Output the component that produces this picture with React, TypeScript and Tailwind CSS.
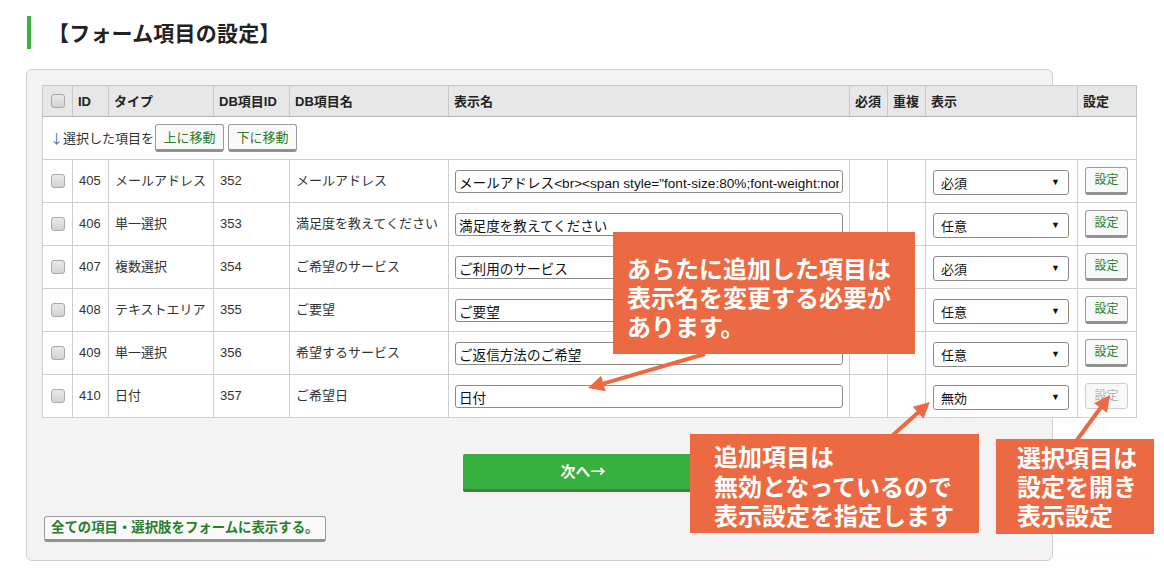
import React from "react";

const rows = [
  { id: "405", type: "メールアドレス", dbid: "352", dbname: "メールアドレス", disp: 'メールアドレス<br><span style="font-size:80%;font-weight:normal">', sel: "必須", enabled: true },
  { id: "406", type: "単一選択", dbid: "353", dbname: "満足度を教えてください", disp: "満足度を教えてください", sel: "任意", enabled: true },
  { id: "407", type: "複数選択", dbid: "354", dbname: "ご希望のサービス", disp: "ご利用のサービス", sel: "必須", enabled: true },
  { id: "408", type: "テキストエリア", dbid: "355", dbname: "ご要望", disp: "ご要望", sel: "任意", enabled: true },
  { id: "409", type: "単一選択", dbid: "356", dbname: "希望するサービス", disp: "ご返信方法のご希望", sel: "任意", enabled: true },
  { id: "410", type: "日付", dbid: "357", dbname: "ご希望日", disp: "日付", sel: "無効", enabled: false },
];

function Checkbox() {
  return (
    <div className="w-[14px] h-[14px] rounded-[3px] border border-[#a9a9a9] bg-gradient-to-b from-[#e9e9e9] to-[#d3d3d3]" />
  );
}

function SmallBtn({ children, className = "" }: { children: React.ReactNode; className?: string }) {
  return (
    <div
      className={
        "flex items-center justify-center bg-[#f9f9f9] border border-[#9a9a9a] border-b-[3px] border-b-[#8e938c] rounded-[3px] text-[#2a7d2a] leading-none " +
        className
      }
    >
      {children}
    </div>
  );
}

function Arrow({ x1, y1, x2, y2 }: { x1: number; y1: number; x2: number; y2: number }) {
  const dx = x2 - x1;
  const dy = y2 - y1;
  const len = Math.sqrt(dx * dx + dy * dy);
  const ux = dx / len;
  const uy = dy / len;
  const hl = 16;
  const hw = 8;
  const bx = x2 - ux * hl;
  const by = y2 - uy * hl;
  const px = -uy;
  const py = ux;
  const pts = `${x2},${y2} ${bx + px * hw},${by + py * hw} ${bx - px * hw},${by - py * hw}`;
  return (
    <g>
      <line x1={x1} y1={y1} x2={bx + ux * 2} y2={by + uy * 2} stroke="#eb6a43" strokeWidth={4} />
      <polygon points={pts} fill="#eb6a43" />
    </g>
  );
}

export default function App() {
  const headers = [
    { w: "w-[30px]", t: "" },
    { w: "w-[36px]", t: "ID" },
    { w: "w-[105px]", t: "タイプ" },
    { w: "w-[76px]", t: "DB項目ID" },
    { w: "w-[159px]", t: "DB項目名" },
    { w: "w-[401px]", t: "表示名" },
    { w: "w-[38px]", t: "必須" },
    { w: "w-[38px]", t: "重複" },
    { w: "w-[152px]", t: "表示" },
    { w: "w-[59px]", t: "設定" },
  ];
  return (
    <div className="relative w-[1164px] h-[580px] overflow-hidden bg-white text-[#333] font-['Liberation_Sans','Noto_Sans_CJK_JP',sans-serif]">
      <div className="pt-[16px] pl-[27px]">
        <div className="h-[33px] border-l-[4px] border-[#3cb043] pl-[17px] flex items-center">
          <span className="text-[21px] font-bold text-[#222] leading-none tracking-[0.2px] font-['Noto_Sans_CJK_JP',sans-serif]">【フォーム項目の設定】</span>
        </div>
      </div>

      <div className="ml-[26px] mt-[20px] w-[1027px] h-[492px] bg-[#f3f3f3] border border-[#cfcfcf] rounded-[6px] pt-[15px] pl-[15px]">
        <table className="table-fixed border-collapse w-[1094px] bg-white text-[13px]">
          <colgroup>
            {headers.map((h, i) => (
              <col key={i} className={h.w} />
            ))}
          </colgroup>
          <thead>
            <tr className="h-[31px] bg-[#e6e7e6]">
              {headers.map((h, i) => (
                <th
                  key={i}
                  className="border border-[#c8c8c8] border-b-[#b5b5b5] text-left font-bold text-[#222] px-[5px] leading-none whitespace-nowrap overflow-visible"
                >
                  {i === 0 ? (
                    <div className="flex justify-center pl-[1px]">
                      <Checkbox />
                    </div>
                  ) : (
                    h.t
                  )}
                </th>
              ))}
            </tr>
          </thead>
          <tbody>
            <tr className="h-[43px]">
              <td colSpan={10} className="border border-[#cfcfcf] px-[7px]">
                <div className="flex items-center">
                  <span className="text-[#333] text-[13px]">
                    <span className="text-[#3a6fc4] font-['Noto_Sans_CJK_JP',sans-serif]">↓</span>選択した項目を
                  </span>
                  <SmallBtn className="ml-[1px] w-[69px] h-[28px] text-[13px]">上に移動</SmallBtn>
                  <SmallBtn className="ml-[4px] w-[69px] h-[28px] text-[13px]">下に移動</SmallBtn>
                </div>
              </td>
            </tr>
            {rows.map((r) => (
              <tr key={r.id} className="h-[43px]">
                <td className="border border-[#cfcfcf]">
                  <div className="flex justify-center pl-[1px]">
                    <Checkbox />
                  </div>
                </td>
                <td className="border border-[#cfcfcf] px-[6px]">{r.id}</td>
                <td className="border border-[#cfcfcf] px-[6px] whitespace-nowrap">{r.type}</td>
                <td className="border border-[#cfcfcf] px-[6px]">{r.dbid}</td>
                <td className="border border-[#cfcfcf] px-[6px] whitespace-nowrap overflow-hidden">{r.dbname}</td>
                <td className="border border-[#cfcfcf] px-[6px] overflow-hidden">
                  <input
                    readOnly
                    value={r.disp}
                    className="block box-border w-[388px] max-w-[388px] h-[23px] mt-[1px] border border-[#8a8a8a] rounded-[3px] bg-white px-[3px] text-[#111] text-[13.6px] outline-none font-['Liberation_Sans','Noto_Sans_CJK_JP',sans-serif]"
                  />
                </td>
                <td className="border border-[#cfcfcf]"></td>
                <td className="border border-[#cfcfcf]"></td>
                <td className="border border-[#cfcfcf] px-[7px]">
                  <div className="w-[136px] h-[25px] mt-[3px] border border-[#8a8a8a] rounded-[3px] bg-white flex items-center justify-between pl-[7px] pr-[8px] text-[#111] text-[13px]">
                    <span className="mt-[3px]">{r.sel}</span>
                    <span className="text-[9px] text-[#111]">▼</span>
                  </div>
                </td>
                <td className="border border-[#cfcfcf] px-[7px]">
                  {r.enabled ? (
                    <SmallBtn className="w-[43px] h-[28px] text-[12px]">設定</SmallBtn>
                  ) : (
                    <div className="w-[43px] h-[26px] flex items-center justify-center border border-[#cfcfcf] rounded-[3px] bg-[#f8f8f8] text-[#b0b0b0] text-[12px] leading-none">
                      設定
                    </div>
                  )}
                </td>
              </tr>
            ))}
          </tbody>
        </table>

        <div className="mt-[36px] ml-[421px] w-[240px] h-[38px] bg-[#36b03f] border-b-[3px] border-[#55773f] rounded-[2px] flex items-center justify-center text-white font-bold text-[15px] font-['Noto_Sans_CJK_JP',sans-serif]">
          次へ→
        </div>

        <SmallBtn className="mt-[24px] ml-[2px] w-[282px] h-[26px] font-bold text-[13.4px] justify-start pl-[6px] rounded-[2px]">
          全ての項目・選択肢をフォームに表示する。
        </SmallBtn>
      </div>

      {/* Annotations */}
      <div className="absolute left-[613px] top-[232px] w-[302px] h-[122px] bg-[#eb6a43] text-white font-bold text-[24px] leading-[29px] pl-[14px] pt-[21px] whitespace-nowrap font-['Noto_Sans_CJK_JP',sans-serif]">
        <div>あらたに追加した項目は</div>
        <div>表示名を変更する必要が</div>
        <div>あります。</div>
      </div>
      <div className="absolute left-[690px] top-[434px] w-[289px] h-[99px] bg-[#eb6a43] text-white font-bold text-[24px] leading-[29.5px] pl-[24px] pt-[7px] whitespace-nowrap font-['Noto_Sans_CJK_JP',sans-serif]">
        <div>追加項目は</div>
        <div>無効となっているので</div>
        <div>表示設定を指定します</div>
      </div>
      <div className="absolute left-[996px] top-[439px] w-[158px] h-[95px] bg-[#eb6a43] text-white font-bold text-[24px] leading-[29px] pl-[21px] pt-[3px] whitespace-nowrap font-['Noto_Sans_CJK_JP',sans-serif]">
        <div>選択項目は</div>
        <div>設定を開き</div>
        <div>表示設定</div>
      </div>

      <svg className="absolute left-0 top-0 pointer-events-none" width={1164} height={580}>
        <Arrow x1={705} y1={354} x2={588} y2={388} />
        <Arrow x1={893} y1={435} x2={930} y2={402} />
        <Arrow x1={1077} y1={440} x2={1110} y2={395} />
      </svg>
    </div>
  );
}
